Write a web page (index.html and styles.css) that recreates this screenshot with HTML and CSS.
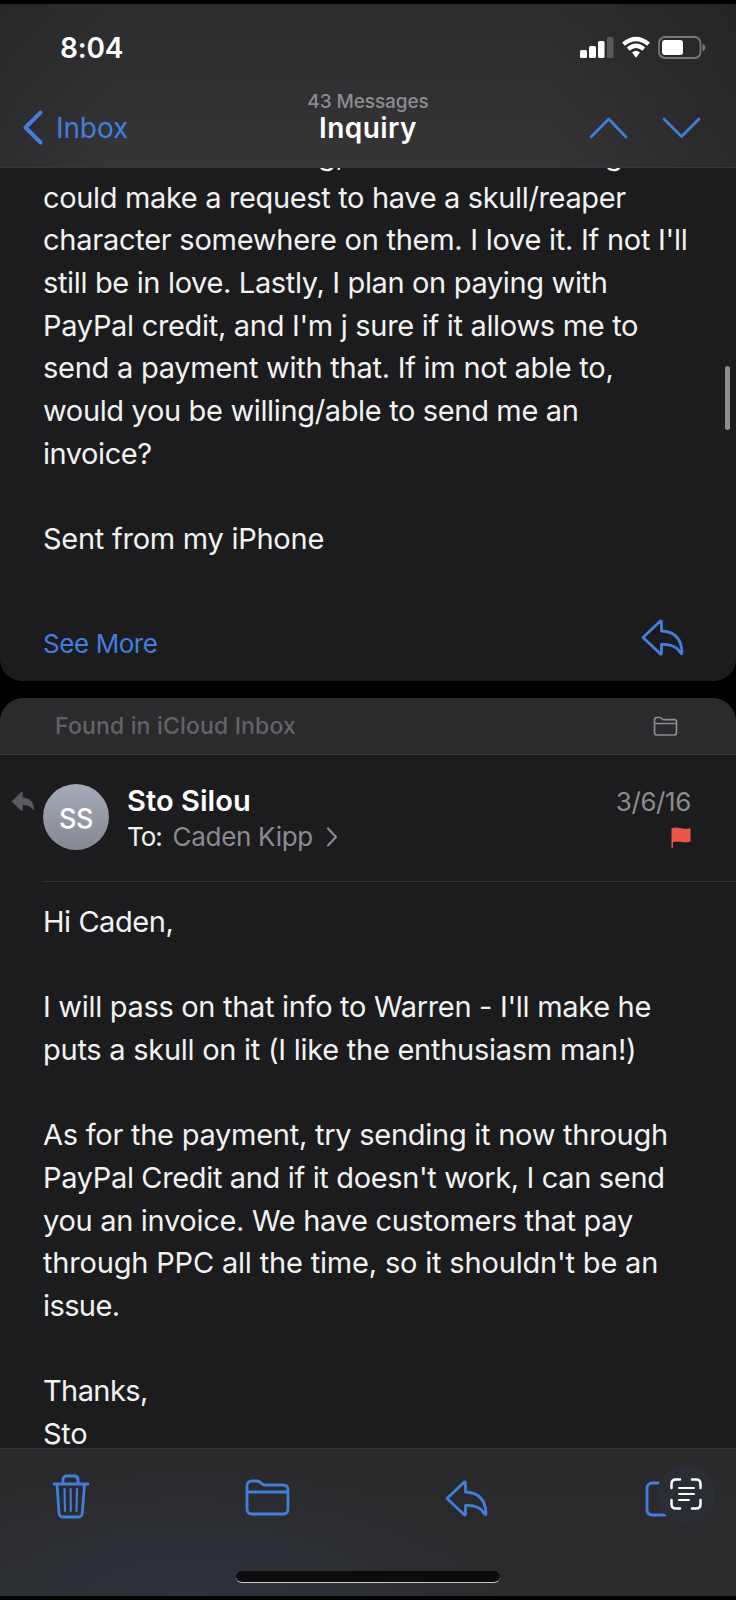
FILE: index.html
```html
<!DOCTYPE html>
<html lang="en">
<head>
<meta charset="utf-8">
<title>Inquiry</title>
<link rel="stylesheet" href="styles.css">
</head>
<body>
<div class="phone">
  <header class="top">
    <div class="status">
      <span class="clock">8:04</span>
      <svg class="status-icons" width="127" height="24" viewBox="0 0 127 24">
        <g fill="#fff"><rect x="0" y="14" width="7" height="8" rx="1.5"/><rect x="9" y="10" width="7" height="12" rx="1.5"/><rect x="18" y="5" width="6.500" height="17" rx="1.500"/></g>
        <rect x="27" y="1" width="6.500" height="21" rx="1.500" fill="#59595b"/>
        <g fill="none" stroke="#fff" stroke-width="4.300"><path d="M43.500 8.200Q56 -2.200 68.500 8.200"/><path d="M48.200 13.200Q56 6.500 63.800 13.200"/></g>
        <path d="M52 16.300Q56 13.300 60 16.300L56.800 20.800Q56 21.800 55.200 20.800Z" fill="#fff"/>
        <rect x="79" y="1" width="41.500" height="21" rx="6" fill="none" stroke="#77777a" stroke-width="1.800"/>
        <rect x="82" y="4" width="21" height="15" rx="3" fill="#fff"/>
        <path d="M122.500 8Q125.500 9 125.500 11.500T122.500 15Z" fill="#77777a"/>
      </svg>
    </div>
    <div class="nav">
      <a class="back">
        <svg width="22" height="36" viewBox="0 0 22 36"><path d="M18.500 2.500L3.500 17.500L18.500 32.500" fill="none" stroke="#427fdd" stroke-width="4" stroke-linecap="round" stroke-linejoin="round"/></svg>
        <span>Inbox</span>
      </a>
      <div class="heading">
        <span class="count">43 Messages</span>
        <span class="subject">Inquiry</span>
      </div>
      <svg class="arrows" width="112" height="24" viewBox="0 0 112 24"><path d="M3 20L20.700 2L38 20M76 2L93.500 19.500L111 2" fill="none" stroke="#427fdd" stroke-width="2.700" stroke-linecap="round" stroke-linejoin="round"/></svg>
    </div>
  </header>

  <main class="thread">
    <section class="card first">
      <div class="body cut">
        <p class="clipped"><span class="c1">g,</span><span class="c2">g</span></p>
        <p class="t4">could make a request to have a skull/reaper</p>
        <p class="t2">character somewhere on them. I love it. If not I'll</p>
        <p class="t4">still be in love. Lastly, I plan on paying with</p>
        <p class="t3">PayPal credit, and I'm j sure if it allows me to</p>
        <p class="t2">send a payment with that. If im not able to,</p>
        <p class="t4">would you be willing/able to send me an</p>
        <p class="t5">invoice?</p>
        <p class="blank"></p>
        <p class="t2">Sent from my iPhone</p>
      </div>
      <div class="more">
        <a>See More</a>
        <svg width="43" height="37" viewBox="0 0 43 37"><path class="line" d="M2 18.500L19.300 2Q20.500 1.500 20.500 3V12Q40 12.500 41 33.500Q41 36 39.200 33.500Q34.500 25 20.500 25.500V34Q20.500 35.600 19.300 34.800Z"/></svg>
      </div>
    </section>

    <section class="card second">
      <div class="found">
        <span>Found in iCloud Inbox</span>
        <svg width="25" height="21" viewBox="0 0 25 21"><path d="M1.500 16.500V4Q1.500 1.500 4 1.500H7Q8 1.500 9 2.700T11 3.700H21Q23.500 3.700 23.500 6V16.500Q23.500 19 21 19H4Q1.500 19 1.500 16.500ZM1.500 7.500H23.500" fill="none" stroke="#8c8c90" stroke-width="1.700"/></svg>
      </div>
      <div class="sender">
        <svg class="replied" width="24" height="21" viewBox="0 0 24 21"><path d="M0.500 10.500L10 1.200Q11.700 0 11.700 2V6.500Q22.500 7.500 23 17.500Q23 20.500 21.500 18Q18 13.700 11.700 14V18.500Q11.700 21 10 19.500Z" fill="#5b5b5f"/></svg>
        <div class="avatar">SS</div>
        <div class="who">
          <div class="name">Sto Silou</div>
          <div class="to"><span class="label">To:</span><span class="recipient">Caden Kipp</span><svg width="12" height="20" viewBox="0 0 12 20"><path d="M2 1.500L10 10L2 18.500" fill="none" stroke="#8c8c90" stroke-width="2.200" stroke-linecap="round" stroke-linejoin="round"/></svg></div>
        </div>
        <div class="meta">
          <span>3/6/16</span>
          <svg width="20" height="21" viewBox="0 0 20 21"><path d="M.5 1.200Q5 -.2 10 1.200T19.500 1V14.500Q15 16.200 10.500 15T2 15V20Q2 21 1.200 21T.5 20Z" fill="#eb5545"/></svg>
        </div>
      </div>
      <div class="body reply">
        <p class="t5">Hi Caden,</p>
        <p class="blank"></p>
        <p class="t3">I will pass on that info to Warren - I'll make he</p>
        <p class="t2">puts a skull on it (I like the enthusiasm man!)</p>
        <p class="blank"></p>
        <p class="t2">As for the payment, try sending it now through</p>
        <p class="t4">PayPal Credit and if it doesn't work, I can send</p>
        <p class="t3">you an invoice. We have customers that pay</p>
        <p class="t1">through PPC all the time, so it shouldn't be an</p>
        <p class="t6">issue.</p>
        <p class="blank"></p>
        <p class="t6">Thanks,</p>
        <p class="t2">Sto</p>
      </div>
    </section>
  </main>

  <footer class="toolbar">
    <div class="tools">
      <svg class="trash" width="38" height="45" viewBox="0 0 38 45"><g class="line"><path d="M2 10H36M11 10V6Q11 2 15 2H22Q26 2 26 6V10M5 10L7 39Q7.300 43 11 43H26Q30 43 30.300 39L32.500 10"/><path d="M12.500 15L13 37M18.700 15V37M25 15L24.500 37" stroke-width="2.100"/></g></svg>
      <svg class="folder" width="45" height="37" viewBox="0 0 45 37"><path class="line" d="M2 30V7Q2 2 7 2H12Q14 2 16 4T20 6H38Q43 6 43 11V30Q43 35 38 35H7Q2 35 2 30ZM2 13H43"/></svg>
      <svg class="answer" width="43" height="37" viewBox="0 0 43 37"><path class="line" d="M2 18.500L19.300 2Q20.500 1.500 20.500 3V12Q40 12.500 41 33.500Q41 36 39.200 33.500Q34.500 25 20.500 25.500V34Q20.500 35.600 19.300 34.800Z"/></svg>
      <svg class="compose" width="42" height="37" viewBox="0 0 42 37"><path class="line" d="M14 2H7.500Q2 2 2 7.500V28.500Q2 34 7.500 34H20"/></svg>
    </div>
    <div class="home"></div>
    <div class="scan">
      <svg width="32" height="32" viewBox="0 0 32 32" fill="none" stroke="#fff" stroke-width="2.500" stroke-linecap="round"><path d="M1.500 10V6Q1.500 1.500 6 1.500H10M22 1.500H26Q30.500 1.500 30.500 6V10M30.500 22V26Q30.500 30.500 26 30.500H22M10 30.500H6Q1.500 30.500 1.500 26V22"/><path d="M9 10H24M9 16H24M9 22H19" stroke-width="2"/></svg>
    </div>
  </footer>
  <div class="scrollbar"></div>
</div>
</body>
</html>
```

FILE: styles.css
```css
* { box-sizing: border-box; margin: 0; padding: 0; }
body { background: #000; font-family: Inter, "Liberation Sans", sans-serif; color: #f2f2f3; }
svg { display: block; flex: none; overflow: visible; }
.phone { position: relative; width: 736px; height: 1600px; padding-top: 4px; overflow: hidden; display: flex; flex-direction: column; white-space: nowrap; }
.line { fill: none; stroke: #427fdd; stroke-width: 2.800; stroke-linecap: round; stroke-linejoin: round; }

/* status and navigation bars */
.top { height: 164px; flex: none; border-bottom: 1px solid #373739; background: linear-gradient(90deg, rgba(28,28,30,.3), transparent 15%, transparent 75%, rgba(28,28,30,.45)), linear-gradient(#2c2c2e, #353537); }
.status { height: 84px; padding: 28px 0 0 60px; display: flex; }
.clock { width: 520px; font-size: 28px; line-height: 32px; font-weight: 600; letter-spacing: -.2px; color: #fff; }
.status-icons { margin-top: 4px; }
.nav { height: 79px; display: flex; }
.back { width: 240px; padding: 22px 0 0 22px; display: flex; gap: 12px; font-size: 28px; line-height: 37px; letter-spacing: -.1px; color: #427fdd; }
.heading { width: 256px; display: flex; flex-direction: column; align-items: center; }
.count { margin-top: 1px; font-size: 19px; line-height: 26px; font-weight: 500; letter-spacing: -.1px; color: #8c8c90; }
.subject { font-size: 28px; line-height: 27px; font-weight: 600; letter-spacing: .45px; color: #fff; }
.arrows { margin: 29px 0 0 92px; }

/* message thread */
.thread { height: 1280px; flex: none; display: flex; flex-direction: column; gap: 17px; overflow: hidden; }
.card { background: #1c1c1e; overflow: hidden; flex: none; }
.first { height: 513px; border-radius: 0 0 22px 22px; }
.second { border-radius: 24px 24px 0 0; }
.body { padding-left: 43px; font-size: 29px; line-height: 42.667px; }
.body p { height: 42.667px; }
.cut { margin-top: -34px; }
.clipped { display: flex; }
.c1 { margin-left: 275px; width: 287px; }
.more { margin-top: 58px; padding-left: 43px; display: flex; align-items: flex-start; justify-content: space-between; padding-right: 52px; font-size: 26px; line-height: 50px; letter-spacing: -.42px; color: #427fdd; }
.found { height: 57px; padding: 0 58px 0 55px; display: flex; align-items: center; justify-content: space-between; background: #2b2b2d; border-bottom: 1px solid #3a3a3c; font-size: 23px; font-weight: 500; letter-spacing: .17px; color: #636367; }
.sender { height: 127px; margin-left: 43px; padding-top: 29px; display: flex; border-bottom: 1px solid #343436; }
.replied { margin: 7px 8px 0 -32px; }
.avatar { width: 66px; height: 66px; border-radius: 50%; background: linear-gradient(#a5abb9, #858892); display: flex; align-items: center; justify-content: center; color: #fff; font-size: 27px; font-weight: 500; letter-spacing: -.4px; padding-top: 3px; }
.who { width: 475px; margin-left: 18px; }
.name { font-size: 29px; line-height: 34px; font-weight: 600; letter-spacing: .05px; color: #fff; }
.to { display: flex; align-items: center; font-size: 26px; line-height: 38px; }
.label { letter-spacing: -1.100px; }
.recipient { margin: 0 13px 0 11px; letter-spacing: -.3px; color: #8c8c90; }
.meta { width: 89px; display: flex; flex-direction: column; align-items: flex-end; font-size: 26px; line-height: 36px; letter-spacing: -.4px; color: #8c8c90; }
.meta svg { margin: 7px 0 0 0; }
.reply { padding-top: 19px; }

/* tracking steps, loosest to tightest */
.t1 { letter-spacing: -.18px; }
.t2 { letter-spacing: -.26px; }
.t3 { letter-spacing: -.31px; }
.t4 { letter-spacing: -.35px; }
.t5 { letter-spacing: -.45px; }
.t6 { letter-spacing: -.6px; }

/* bottom toolbar */
.toolbar { position: relative; height: 148px; flex: none; border-top: 1px solid #353537; background: radial-gradient(ellipse 310px 130px at 190px 150px, #2d333c, rgba(45,51,60,0)), linear-gradient(#29292b, #2c2c2e); }
.tools { height: 122px; display: flex; }
.trash { margin: 25px 0 0 52px; }
.folder { margin: 30px 0 0 155px; }
.answer { margin: 31px 0 0 155px; }
.compose { margin: 32px 0 0 157px; }
.home { width: 264px; height: 12px; margin-left: 236px; border-radius: 6px; background: #0c0c0d; border-bottom: 1.500px solid #c9c9cb; }
.scan { position: absolute; left: 657px; top: 16px; width: 58px; height: 58px; border-radius: 50%; background: #2b2d35; display: grid; place-items: center; }
.scrollbar { position: absolute; right: 6px; top: 366px; width: 5px; height: 64px; border-radius: 3px; background: #8d8d8f; }
```
